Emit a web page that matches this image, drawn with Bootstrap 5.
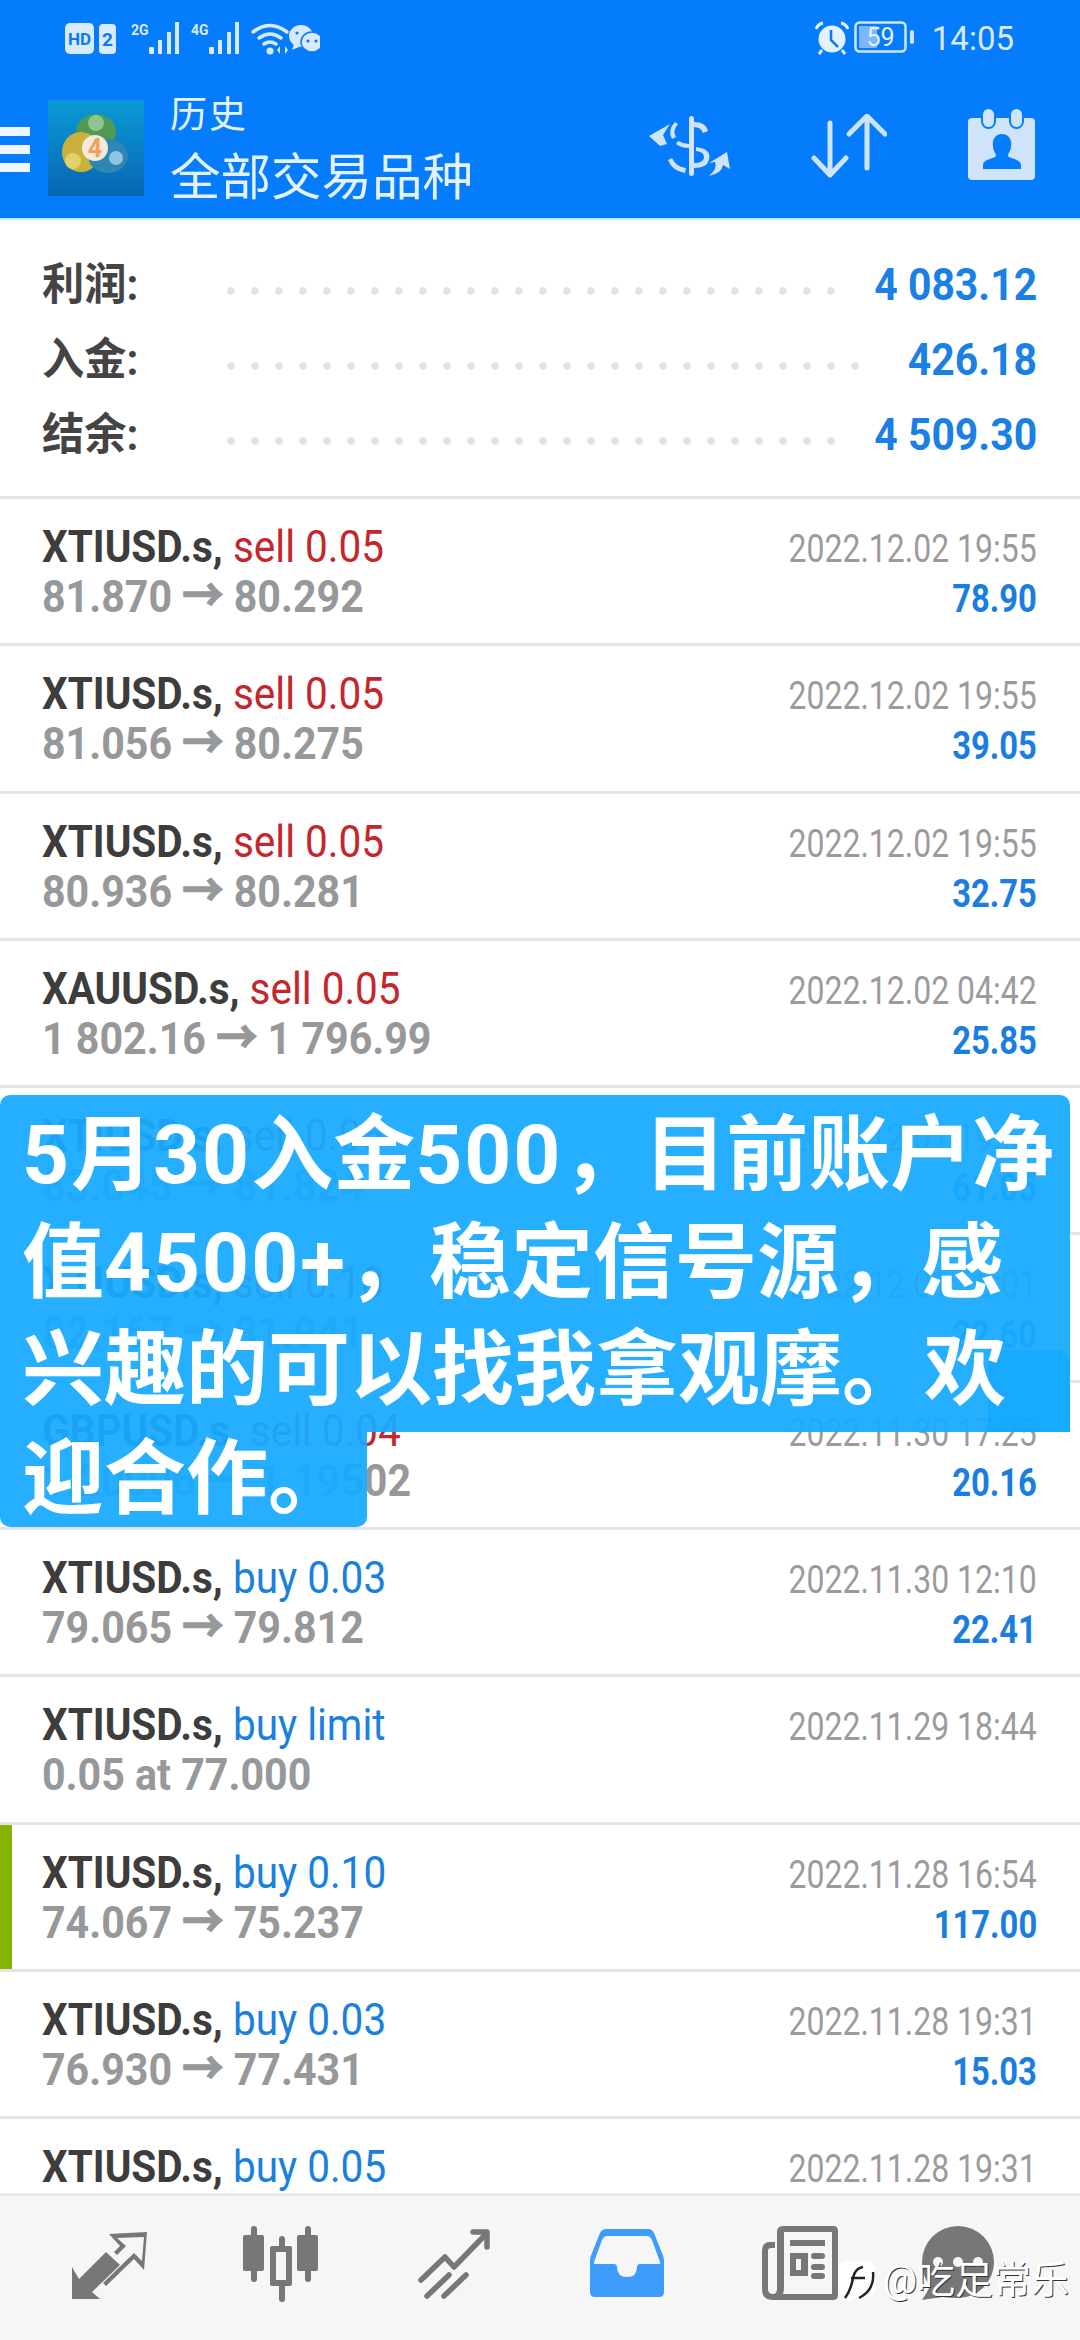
<!DOCTYPE html>
<html lang="zh-CN">
<head>
    <meta charset="UTF-8">
    <meta name="viewport" content="width=device-width, initial-scale=1.0">
    <title>历史</title>
    <link href="https://cdn.jsdelivr.net/npm/bootstrap@5.3.0/dist/css/bootstrap.min.css" rel="stylesheet">
    <style>
        body {
            background: #fff;
            font-family: Roboto, "Noto Sans CJK SC", sans-serif;
        }
        .phone {
            width: 1080px;
            height: 2340px;
            position: relative;
            overflow: hidden;
        }
        .top-area {
            height: 220px;
            background: #047cfb;
            border-bottom: 2px solid #bfe6ff;
            color: #e4f1ff;
            flex: none;
        }
        .status-line {
            height: 78px;
            padding: 21px 66px 0 65px;
        }
        .status-time {
            font-size: 33px;
            line-height: 36px;
            color: #d9eaff;
            margin-left: 16px;
        }
        .title-line {
            height: 140px;
        }
        .burger {
            width: 30px;
            height: 46px;
            margin-top: 49px;
            background: linear-gradient(#eef6ff 0 9px, transparent 9px 18px, #eef6ff 18px 27px, transparent 27px 36px, #eef6ff 36px 45px, transparent 45px);
        }
        .app-logo {
            margin-left: 18px;
            margin-top: 22px;
        }
        .title-text {
            margin-left: 26px;
            margin-top: 15px;
        }
        .title-small {
            font-size: 37px;
            line-height: 46px;
            letter-spacing: 2px;
        }
        .title-big {
            font-size: 50.5px;
            line-height: 62px;
            margin-top: 8px;
        }
        .top-icons {
            margin-left: auto;
            padding: 36px 43px 0 0;
            gap: 80px;
        }
        .summary-box {
            height: 276px;
            padding: 40px 43px 0 42px;
            flex: none;
        }
        .sum-line {
            height: 75px;
        }
        .sum-label {
            width: 183px;
            font-size: 44px;
            font-weight: 700;
            color: #444;
            line-height: 50px;
            height: 50px;
            white-space: nowrap;
            transform: scaleX(.96);
            transform-origin: left;
        }
        .sum-dots {
            height: 10px;
            margin-top: 26px;
            background: radial-gradient(circle at 6px 5px, #e2e2e2 3.5px, transparent 4px) left / 24px 10px repeat-x;
        }
        .sum-value {
            font-size: 44px;
            font-weight: 700;
            line-height: 50px;
            color: #1a80e6;
            white-space: nowrap;
        }
        .sum-value .squish {
            transform: scaleX(.93);
        }
        .deal-list {
            flex: 1 1 auto;
            min-height: 0;
            overflow: hidden;
        }
        .deal-row {
            height: 147.3px;
            border-top: 3px solid #e4e4e4;
            padding: 23px 43px 0 42px;
            position: relative;
        }
        .green-edge {
            position: absolute;
            left: 0;
            top: 0;
            bottom: 0;
            width: 12px;
            background: #85b300;
        }
        .squish {
            display: inline-block;
            white-space: nowrap;
            transform-origin: left;
        }
        .squish-r {
            transform-origin: right;
        }
        .deal-head {
            font-size: 45px;
            line-height: 50px;
            height: 50px;
        }
        .deal-head .squish {
            transform: scaleX(.9);
        }
        .deal-sym {
            font-weight: 700;
            color: #3d3d3d;
        }
        .deal-sell {
            color: #c4262b;
        }
        .deal-buy {
            color: #1a80e0;
        }
        .deal-price {
            font-size: 45px;
            font-weight: 700;
            line-height: 50px;
            color: #97989a;
        }
        .deal-price .squish {
            transform: scaleX(.915);
        }
        .deal-arrow {
            -webkit-text-stroke: 1.5px #97989a;
        }
        .deal-date {
            font-size: 39px;
            line-height: 50px;
            height: 50px;
            color: #9b9b9d;
            margin-top: 2px;
        }
        .deal-date .squish {
            transform: scaleX(.82);
        }
        .deal-profit {
            font-size: 39px;
            font-weight: 700;
            line-height: 50px;
            color: #1a7ee0;
        }
        .deal-profit .squish {
            transform: scaleX(.84);
        }
        .bottom-bar {
            height: 147px;
            flex: none;
            background: #f6f6f6;
            border-top: 3px solid #e8e8e8;
            position: relative;
        }
        .bar-cell {
            position: absolute;
            top: 33px;
        }
        .promo {
            position: absolute;
            left: 0;
            top: 1095px;
            color: #fff;
            font-family: Roboto, "Noto Sans CJK SC", sans-serif;
            font-weight: 700;
            font-size: 82px;
            line-height: 107.5px;
        }
        .promo-main {
            position: relative;
            z-index: 0;
            width: 1070px;
            height: 337px;
            padding: 7px 0 0 22px;
            background: rgba(24, 170, 255, .94);
            border-radius: 10px 10px 0 0;
            white-space: nowrap;
        }
        .promo-num {
            letter-spacing: 2px;
        }
        .promo-tail {
            width: 367px;
            height: 95px;
            padding: 0 0 0 22px;
            background: rgba(24, 170, 255, .94);
            border-radius: 0 0 10px 10px;
            white-space: nowrap;
            line-height: 95px;
        }
        .promo-patch {
            position: absolute;
            z-index: -1;
            right: 0;
            bottom: 0;
            width: 82px;
            height: 82px;
            background: rgba(10, 165, 255, .5);
            border-radius: 14px 14px 0 0;
        }
        .wm-mark {
            position: absolute;
            left: 839px;
            top: 2260px;
            display: flex;
            align-items: flex-start;
            gap: 8px;
        }
        .wm-text {
            color: #fff;
            font-size: 38px;
            line-height: 40px;
            text-shadow: 1px 1px 0 #333;
            white-space: nowrap;
        }
    </style>
</head>
<body>
<div class="phone d-flex flex-column">

    <div class="top-area">
        <div class="status-line d-flex align-items-start">
            <svg width="255" height="36" viewBox="0 0 255 36">
                <rect x="0" y="2" width="29" height="31" rx="5" fill="#d9eaff"/>
                <text x="14.5" y="24" font-family="Roboto" font-size="17" font-weight="700" fill="#047cfb" text-anchor="middle">HD</text>
                <rect x="34" y="3" width="17" height="30" rx="4" fill="#d9eaff"/>
                <text x="42.5" y="25" font-family="Roboto" font-size="19" font-weight="700" fill="#047cfb" text-anchor="middle">2</text>
                <text x="66" y="14" font-family="Roboto" font-size="14" font-weight="700" fill="#d9eaff">2G</text>
                <g fill="#d9eaff">
                    <rect x="84" y="26" width="5" height="7" rx="1"/><rect x="93" y="19" width="4" height="14"/><rect x="102" y="11" width="4" height="22"/><rect x="110" y="1" width="4" height="32"/>
                </g>
                <text x="126" y="14" font-family="Roboto" font-size="14" font-weight="700" fill="#d9eaff">4G</text>
                <g fill="#d9eaff">
                    <rect x="144" y="26" width="5" height="7" rx="1"/><rect x="153" y="19" width="4" height="14"/><rect x="162" y="11" width="4" height="22"/><rect x="170" y="1" width="4" height="32"/>
                </g>
                <g fill="none" stroke="#d9eaff" stroke-width="3.5" stroke-linecap="round">
                    <path d="M188 11q17-13 34 0"/><path d="M194 17q11-8 22 0"/><path d="M199 23q6-4 12 0"/>
                </g>
                <circle cx="205" cy="30" r="3.5" fill="#d9eaff"/>
                <path d="M215 25v8l-3-4zM220 25v8l3-4z" fill="#d9eaff"/>
                <ellipse cx="236" cy="15" rx="12" ry="11" fill="#d9eaff"/>
                <path d="M229 23l-2 6 7-3z" fill="#d9eaff"/>
                <ellipse cx="247" cy="21" rx="11" ry="10" fill="#d9eaff" stroke="#047cfb" stroke-width="1.5"/>
                <circle cx="243" cy="20" r="1.6" fill="#047cfb"/><circle cx="251" cy="20" r="1.6" fill="#047cfb"/>
                <circle cx="232" cy="12" r="1.6" fill="#047cfb"/>
            </svg>
            <div class="ms-auto d-flex align-items-start">
                <svg width="36" height="34" viewBox="0 0 36 34" class="me-1 mt-0">
                    <circle cx="18" cy="18" r="13.5" fill="#e4f1ff"/>
                    <path d="M17 9v10l7 7" fill="none" stroke="#047cfb" stroke-width="2.5"/>
                    <path d="M2 8q2-5 7-6M34 8q-2-5-7-6" fill="none" stroke="#e4f1ff" stroke-width="3"/>
                    <path d="M8 29l-3 4M28 29l3 4" stroke="#e4f1ff" stroke-width="3"/>
                </svg>
                <svg width="62" height="32" viewBox="0 0 62 32">
                    <rect x="1.5" y="1.5" width="50" height="29" rx="4" fill="none" stroke="#cfe5ff" stroke-width="2.5"/>
                    <rect x="5" y="5" width="18" height="22" rx="1" fill="#7fb6fb"/>
                    <rect x="56" y="9" width="4" height="14" rx="2" fill="#cfe5ff"/>
                    <text x="26.5" y="25" font-family="Roboto" font-size="25" fill="#e4f1ff" text-anchor="middle">59</text>
                </svg>
                <span class="status-time">14:05</span>
            </div>
        </div>
        <div class="title-line d-flex align-items-start">
            <div class="burger"></div>
            <svg class="app-logo" width="96" height="96" viewBox="0 0 96 96">
                <defs>
                    <linearGradient id="logoBg" x1="0" y1="0" x2="0" y2="1">
                        <stop offset="0" stop-color="#0a9ad8"/>
                        <stop offset="1" stop-color="#0866b4"/>
                    </linearGradient>
                </defs>
                <rect width="96" height="96" fill="url(#logoBg)"/>
                <ellipse cx="48" cy="32" rx="20" ry="18" fill="#4f9a55"/>
                <circle cx="48" cy="23" r="8" fill="#8fc58f"/>
                <ellipse cx="33" cy="52" rx="19" ry="20" fill="#c9b13c"/>
                <circle cx="25" cy="61" r="8" fill="#e2d06a"/>
                <ellipse cx="60" cy="56" rx="20" ry="17" fill="#2f86b4"/>
                <circle cx="68" cy="58" r="7" fill="#8fc7e2"/>
                <circle cx="47" cy="48" r="13" fill="#f4e9dc"/>
                <text x="47" y="57" font-family="Roboto" font-size="25" font-weight="700" fill="#eba35a" text-anchor="middle">4</text>
            </svg>
            <div class="title-text">
                <div class="title-small">历史</div>
                <div class="title-big">全部交易品种</div>
            </div>
            <div class="top-icons d-flex align-items-start">
                <svg width="82" height="66" viewBox="0 0 82 66" fill="#cfe3fb">
                    <rect x="40" y="2" width="5" height="60" rx="2.5"/>
                    <path d="M0 22l21-12-7 11 4 9-7 2z"/>
                    <path d="M29 10q-6 7-2 13l-4 2q-5-9 3-17zM29 27q6 3 11 3v4q-8 0-13-4z"/>
                    <path d="M45 8q12 0 14 9l-5 2q-2-6-9-6zM47 33q16 2 13 13-2 8-15 8v-5q9 0 10-5 1-6-8-7z"/>
                    <path d="M23 44q4 9 14 10l-1 5q-13-2-17-13z"/>
                    <path d="M60 62q9-8 6-14l-6 1 18-11 3 17-7-4q-1 8-14 11z"/>
                </svg>
                <svg width="76" height="66" viewBox="0 0 76 66" fill="none" stroke="#cfe3fb" stroke-width="5" stroke-linecap="round" stroke-linejoin="round">
                    <path d="M19 9v52M3 44l16 17 16-17"/>
                    <path d="M56 2v52M38 20L56 2l18 18"/>
                </svg>
                <svg width="70" height="72" viewBox="0 0 70 72" style="margin-top:-6px" fill="#cfe3fb">
                    <path d="M5 10h59a4 4 0 0 1 4 4v54a4 4 0 0 1-4 4H5a4 4 0 0 1-4-4V14a4 4 0 0 1 4-4z"/>
                    <rect x="15" y="0" width="13" height="20" rx="6.5" stroke="#047cfb" stroke-width="2"/>
                    <rect x="43" y="0" width="13" height="20" rx="6.5" stroke="#047cfb" stroke-width="2"/>
                    <path d="M35 26c-7 0-10 6-9 12 0 5 3 7 3 10-2 3-13 3-13 9v4h38v-4c0-6-11-6-13-9 0-3 3-5 3-10 1-6-2-12-9-12z" fill="#047cfb"/>
                </svg>
            </div>
        </div>
    </div>

    <div class="summary-box">
        <div class="sum-line d-flex align-items-start">
            <div class="sum-label">利润:</div>
            <div class="sum-dots flex-fill"></div>
            <div class="sum-value ms-4"><span class="squish squish-r">4 083.12</span></div>
        </div>
        <div class="sum-line d-flex align-items-start">
            <div class="sum-label">入金:</div>
            <div class="sum-dots flex-fill"></div>
            <div class="sum-value ms-4"><span class="squish squish-r">426.18</span></div>
        </div>
        <div class="sum-line d-flex align-items-start">
            <div class="sum-label">结余:</div>
            <div class="sum-dots flex-fill"></div>
            <div class="sum-value ms-4"><span class="squish squish-r">4 509.30</span></div>
        </div>
    </div>

    <div class="deal-list">
        <div class="deal-row d-flex justify-content-between">
            <div>
                <div class="deal-head"><span class="squish"><span class="deal-sym">XTIUSD.s,</span> <span class="deal-sell">sell 0.05</span></span></div>
                <div class="deal-price"><span class="squish">81.870 <span class="deal-arrow">→</span> 80.292</span></div>
            </div>
            <div class="text-end">
                <div class="deal-date"><span class="squish squish-r">2022.12.02 19:55</span></div>
                <div class="deal-profit"><span class="squish squish-r">78.90</span></div>
            </div>
        </div>
        <div class="deal-row d-flex justify-content-between">
            <div>
                <div class="deal-head"><span class="squish"><span class="deal-sym">XTIUSD.s,</span> <span class="deal-sell">sell 0.05</span></span></div>
                <div class="deal-price"><span class="squish">81.056 <span class="deal-arrow">→</span> 80.275</span></div>
            </div>
            <div class="text-end">
                <div class="deal-date"><span class="squish squish-r">2022.12.02 19:55</span></div>
                <div class="deal-profit"><span class="squish squish-r">39.05</span></div>
            </div>
        </div>
        <div class="deal-row d-flex justify-content-between">
            <div>
                <div class="deal-head"><span class="squish"><span class="deal-sym">XTIUSD.s,</span> <span class="deal-sell">sell 0.05</span></span></div>
                <div class="deal-price"><span class="squish">80.936 <span class="deal-arrow">→</span> 80.281</span></div>
            </div>
            <div class="text-end">
                <div class="deal-date"><span class="squish squish-r">2022.12.02 19:55</span></div>
                <div class="deal-profit"><span class="squish squish-r">32.75</span></div>
            </div>
        </div>
        <div class="deal-row d-flex justify-content-between">
            <div>
                <div class="deal-head"><span class="squish"><span class="deal-sym">XAUUSD.s,</span> <span class="deal-sell">sell 0.05</span></span></div>
                <div class="deal-price"><span class="squish">1 802.16 <span class="deal-arrow">→</span> 1 796.99</span></div>
            </div>
            <div class="text-end">
                <div class="deal-date"><span class="squish squish-r">2022.12.02 04:42</span></div>
                <div class="deal-profit"><span class="squish squish-r">25.85</span></div>
            </div>
        </div>
        <div class="deal-row d-flex justify-content-between">
            <div>
                <div class="deal-head"><span class="squish"><span class="deal-sym">XTIUSD.s,</span> <span class="deal-sell">sell 0.05</span></span></div>
                <div class="deal-price"><span class="squish">83.045 <span class="deal-arrow">→</span> 81.824</span></div>
            </div>
            <div class="text-end">
                <div class="deal-date"><span class="squish squish-r">2022.12.01 19:55</span></div>
                <div class="deal-profit"><span class="squish squish-r">61.05</span></div>
            </div>
        </div>
        <div class="deal-row d-flex justify-content-between">
            <div>
                <div class="deal-head"><span class="squish"><span class="deal-sym">XTIUSD.s,</span> <span class="deal-sell">sell 0.10</span></span></div>
                <div class="deal-price"><span class="squish">82.167 <span class="deal-arrow">→</span> 81.941</span></div>
            </div>
            <div class="text-end">
                <div class="deal-date"><span class="squish squish-r">2022.12.01 16:01</span></div>
                <div class="deal-profit"><span class="squish squish-r">22.60</span></div>
            </div>
        </div>
        <div class="deal-row d-flex justify-content-between">
            <div>
                <div class="deal-head"><span class="squish"><span class="deal-sym">GBPUSD.s,</span> <span class="deal-sell">sell 0.04</span></span></div>
                <div class="deal-price"><span class="squish">1.20006 <span class="deal-arrow">→</span> 1.19502</span></div>
            </div>
            <div class="text-end">
                <div class="deal-date"><span class="squish squish-r">2022.11.30 17:25</span></div>
                <div class="deal-profit"><span class="squish squish-r">20.16</span></div>
            </div>
        </div>
        <div class="deal-row d-flex justify-content-between">
            <div>
                <div class="deal-head"><span class="squish"><span class="deal-sym">XTIUSD.s,</span> <span class="deal-buy">buy 0.03</span></span></div>
                <div class="deal-price"><span class="squish">79.065 <span class="deal-arrow">→</span> 79.812</span></div>
            </div>
            <div class="text-end">
                <div class="deal-date"><span class="squish squish-r">2022.11.30 12:10</span></div>
                <div class="deal-profit"><span class="squish squish-r">22.41</span></div>
            </div>
        </div>
        <div class="deal-row d-flex justify-content-between">
            <div>
                <div class="deal-head"><span class="squish"><span class="deal-sym">XTIUSD.s,</span> <span class="deal-buy">buy limit</span></span></div>
                <div class="deal-price"><span class="squish">0.05 at 77.000</span></div>
            </div>
            <div class="text-end">
                <div class="deal-date"><span class="squish squish-r">2022.11.29 18:44</span></div>
            </div>
        </div>
        <div class="deal-row d-flex justify-content-between">
            <div class="green-edge"></div>
            <div>
                <div class="deal-head"><span class="squish"><span class="deal-sym">XTIUSD.s,</span> <span class="deal-buy">buy 0.10</span></span></div>
                <div class="deal-price"><span class="squish">74.067 <span class="deal-arrow">→</span> 75.237</span></div>
            </div>
            <div class="text-end">
                <div class="deal-date"><span class="squish squish-r">2022.11.28 16:54</span></div>
                <div class="deal-profit"><span class="squish squish-r">117.00</span></div>
            </div>
        </div>
        <div class="deal-row d-flex justify-content-between">
            <div>
                <div class="deal-head"><span class="squish"><span class="deal-sym">XTIUSD.s,</span> <span class="deal-buy">buy 0.03</span></span></div>
                <div class="deal-price"><span class="squish">76.930 <span class="deal-arrow">→</span> 77.431</span></div>
            </div>
            <div class="text-end">
                <div class="deal-date"><span class="squish squish-r">2022.11.28 19:31</span></div>
                <div class="deal-profit"><span class="squish squish-r">15.03</span></div>
            </div>
        </div>
        <div class="deal-row d-flex justify-content-between">
            <div>
                <div class="deal-head"><span class="squish"><span class="deal-sym">XTIUSD.s,</span> <span class="deal-buy">buy 0.05</span></span></div>
            </div>
            <div class="text-end">
                <div class="deal-date"><span class="squish squish-r">2022.11.28 19:31</span></div>
            </div>
        </div>
    </div>

    <div class="bottom-bar">
        <svg class="bar-cell" style="left:72px" width="78" height="70" viewBox="0 0 78 70" fill="#777">
            <path d="M0 38v32h28l-8-7 28-27-14-13-27 27z"/>
            <path d="M37 5l38-2-3 38-10-11-28 27-3-3 31-30 8 8 2-24-27 1 9 8-9 9-3-3 6-6z" />
        </svg>
        <svg class="bar-cell" style="left:243px;top:30px" width="78" height="76" viewBox="0 0 78 76" fill="#777">
            <rect x="8" y="0" width="6" height="56" rx="3"/><rect x="0" y="9" width="21" height="36" rx="2"/>
            <rect x="36" y="10" width="6" height="66" rx="3"/><rect x="27" y="20" width="22" height="40" rx="2"/><rect x="33" y="26" width="10" height="28" fill="#f6f6f6"/>
            <rect x="62" y="0" width="6" height="56" rx="3"/><rect x="54" y="9" width="21" height="36" rx="2"/>
        </svg>
        <svg class="bar-cell" style="left:418px" width="74" height="70" viewBox="0 0 74 70" fill="none" stroke="#777" stroke-width="5.5" stroke-linecap="round" stroke-linejoin="round">
            <path d="M3 51l24-23 9 10 32-33"/><path d="M55 3h14v15"/>
            <path d="M9 67l22-21M26 67l22-21"/>
        </svg>
        <svg class="bar-cell" style="left:590px" width="74" height="68" viewBox="0 0 74 68">
            <path d="M16 0h42q4 0 6 4l8 20q2 4 2 8v31q0 5-5 5H5q-5 0-5-5V32q0-4 2-8l8-20q2-4 6-4z" fill="#3f9cff"/>
            <path d="M17 7h40q3 0 5 4l8 22q1 2-2 2H50q-3 0-3 3 0 10-10 10t-10-10q0-3-3-3H6q-3 0-2-2l8-22q2-4 5-4z" fill="#f6f6f6"/>
        </svg>
        <svg class="bar-cell" style="left:762px;top:30px" width="76" height="74" viewBox="0 0 76 74" fill="#777">
            <path fill-rule="evenodd" d="M21 0h50q5 0 5 5v64q0 5-5 5H11q-11 0-11-11V25q0-9 8-9h5v6H9q-3 0-3 3v38q0 5 5 5 4 0 4-5V6q0-6 6-6zm1 6v56q0 3-1 6h49V6z"/>
            <rect x="28" y="14" width="35" height="6"/>
            <path fill-rule="evenodd" d="M28 27h18v23H28zm6 6v11h5V33z"/>
            <rect x="49" y="27" width="14" height="6" rx="3"/><rect x="49" y="38" width="14" height="6" rx="3"/><rect x="49" y="47" width="14" height="6" rx="3"/>
        </svg>
        <svg class="bar-cell" style="left:922px;top:30px" width="72" height="74" viewBox="0 0 72 74" fill="#777">
            <path d="M36 0a36 36 0 0 1 0 72q-8 0-16-1l-20 3q5-7 8-14Q0 50 0 36A36 36 0 0 1 36 0z"/>
            <circle cx="16" cy="36" r="5" fill="#f6f6f6"/><circle cx="36" cy="36" r="5" fill="#f6f6f6"/><circle cx="56" cy="36" r="5" fill="#f6f6f6"/>
        </svg>
    </div>

    <div class="promo">
        <div class="promo-main"><span class="promo-num">5</span>月<span class="promo-num">30</span>入金<span class="promo-num">500</span>，目前账户净<br>值<span class="promo-num">4500+</span>，稳定信号源，感<br>兴趣的可以找我拿观摩。欢<span class="promo-patch"></span></div>
        <div class="promo-tail">迎合作。</div>
    </div>

    <div class="wm-mark">
        <svg width="36" height="44" viewBox="0 0 36 44">
            <path d="M8 1h20q8 0 8 8v20q0 8-8 8H18l-10 6 2-7Q0 36 0 29V9q0-8 8-8z" fill="#fff"/>
            <path d="M6 38q6-8 8-20 2-10 10-11M12 18h14M34 12q2 18-14 26" fill="none" stroke="#222" stroke-width="2.5"/>
        </svg>
        <span class="wm-text">@吃足常乐</span>
    </div>
</div>
<script src="https://cdn.jsdelivr.net/npm/bootstrap@5.3.0/dist/js/bootstrap.bundle.min.js"></script>
</body>
</html>
